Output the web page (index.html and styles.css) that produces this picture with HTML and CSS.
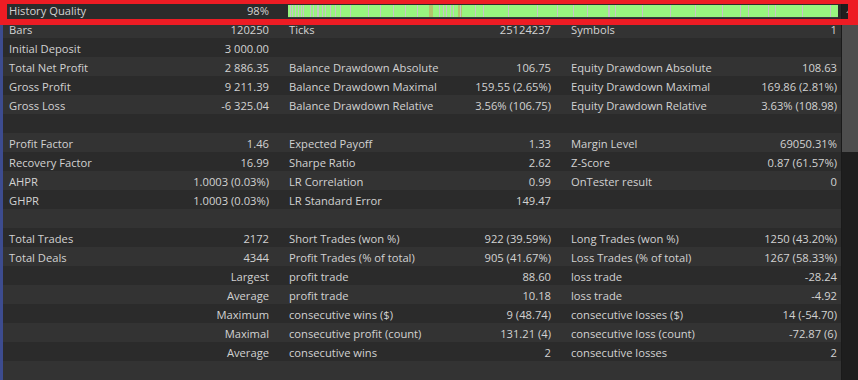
FILE: index.html
```html
<!DOCTYPE html>
<html>
<head>
<meta charset="utf-8">
<link rel="stylesheet" href="styles.css">
</head>
<body>
<div class="window">
  <div class="strip"></div>
  <div class="table">
    <div class="row">
      <span class="ca">History Quality</span><span class="cb">98%</span>
      <div class="barcell">
        <div class="bar">
          <i style="left:2px"></i><i style="left:4px"></i><i style="left:7px"></i><i style="left:10px"></i><i style="left:13px"></i><i style="left:15px"></i><i style="left:22px"></i><i style="left:25px"></i><i class="w" style="left:29px"></i><i style="left:34px"></i><i style="left:37px"></i><i style="left:42px"></i><i style="left:47px"></i><i style="left:52px"></i><i style="left:62px"></i><i style="left:80px"></i><i style="left:92px"></i><i style="left:105px"></i><i style="left:117px"></i><i style="left:129px"></i><i class="o" style="left:141px"></i><i style="left:151px"></i><i style="left:155px"></i><i style="left:158px"></i><i style="left:162px"></i><i style="left:165px"></i><i class="o" style="left:170px"></i><i style="left:172px"></i><i style="left:187px"></i><i style="left:195px"></i><i style="left:220px"></i><i style="left:249px"></i><i style="left:269px"></i><i style="left:285px"></i><i style="left:299px"></i><i class="w" style="left:320px"></i><i style="left:327px"></i><i style="left:354px"></i><i style="left:382px"></i><i style="left:407px"></i><i style="left:434px"></i><i style="left:452px"></i><i style="left:460px"></i><i style="left:480px"></i><i style="left:487px"></i><i style="left:514px"></i><i style="left:542px"></i>
        </div>
      </div>
    </div>
    <div class="row"><span class="ca">Bars</span><span class="cb">120250</span><span class="cc">Ticks</span><span class="cd">25124237</span><span class="ce">Symbols</span><span class="cf">1</span></div>
    <div class="row"><span class="ca">Initial Deposit</span><span class="cb">3 000.00</span><span class="cc"></span><span class="cd"></span><span class="ce"></span><span class="cf"></span></div>
    <div class="row"><span class="ca">Total Net Profit</span><span class="cb">2 886.35</span><span class="cc">Balance Drawdown Absolute</span><span class="cd">106.75</span><span class="ce">Equity Drawdown Absolute</span><span class="cf">108.63</span></div>
    <div class="row"><span class="ca">Gross Profit</span><span class="cb">9 211.39</span><span class="cc">Balance Drawdown Maximal</span><span class="cd">159.55 (2.65%)</span><span class="ce">Equity Drawdown Maximal</span><span class="cf">169.86 (2.81%)</span></div>
    <div class="row"><span class="ca">Gross Loss</span><span class="cb">-6 325.04</span><span class="cc">Balance Drawdown Relative</span><span class="cd">3.56% (106.75)</span><span class="ce">Equity Drawdown Relative</span><span class="cf">3.63% (108.98)</span></div>
    <div class="row"></div>
    <div class="row"><span class="ca">Profit Factor</span><span class="cb">1.46</span><span class="cc">Expected Payoff</span><span class="cd">1.33</span><span class="ce">Margin Level</span><span class="cf">69050.31%</span></div>
    <div class="row"><span class="ca">Recovery Factor</span><span class="cb">16.99</span><span class="cc">Sharpe Ratio</span><span class="cd">2.62</span><span class="ce">Z-Score</span><span class="cf">0.87 (61.57%)</span></div>
    <div class="row"><span class="ca">AHPR</span><span class="cb">1.0003 (0.03%)</span><span class="cc">LR Correlation</span><span class="cd">0.99</span><span class="ce">OnTester result</span><span class="cf">0</span></div>
    <div class="row"><span class="ca">GHPR</span><span class="cb">1.0003 (0.03%)</span><span class="cc">LR Standard Error</span><span class="cd">149.47</span><span class="ce"></span><span class="cf"></span></div>
    <div class="row"></div>
    <div class="row"><span class="ca">Total Trades</span><span class="cb">2172</span><span class="cc">Short Trades (won %)</span><span class="cd">922 (39.59%)</span><span class="ce">Long Trades (won %)</span><span class="cf">1250 (43.20%)</span></div>
    <div class="row"><span class="ca">Total Deals</span><span class="cb">4344</span><span class="cc">Profit Trades (% of total)</span><span class="cd">905 (41.67%)</span><span class="ce">Loss Trades (% of total)</span><span class="cf">1267 (58.33%)</span></div>
    <div class="row"><span class="ca"></span><span class="cb">Largest</span><span class="cc">profit trade</span><span class="cd">88.60</span><span class="ce">loss trade</span><span class="cf">-28.24</span></div>
    <div class="row"><span class="ca"></span><span class="cb">Average</span><span class="cc">profit trade</span><span class="cd">10.18</span><span class="ce">loss trade</span><span class="cf">-4.92</span></div>
    <div class="row"><span class="ca"></span><span class="cb">Maximum</span><span class="cc">consecutive wins ($)</span><span class="cd">9 (48.74)</span><span class="ce">consecutive losses ($)</span><span class="cf">14 (-54.70)</span></div>
    <div class="row"><span class="ca"></span><span class="cb">Maximal</span><span class="cc">consecutive profit (count)</span><span class="cd">131.21 (4)</span><span class="ce">consecutive loss (count)</span><span class="cf">-72.87 (6)</span></div>
    <div class="row"><span class="ca"></span><span class="cb">Average</span><span class="cc">consecutive wins</span><span class="cd">2</span><span class="ce">consecutive losses</span><span class="cf">2</span></div>
    <div class="row"></div>
  </div>
  <div class="scrollbar">
    <div class="arrow"></div>
    <div class="thumb"></div>
    <div class="track"></div>
  </div>
  <div class="highlight"></div>
</div>
</body>
</html>
```

FILE: styles.css
```css
html, body {
  margin: 0;
  padding: 0;
  background: #2b2b2b;
}

.window {
  position: relative;
  display: flex;
  width: 858px;
  height: 380px;
  overflow: hidden;
  background: #1e1e1e;
  font-family: "Open Sans", "Noto Sans", sans-serif;
  font-size: 11.2px;
  color: #d2d2d2;
}

.strip {
  flex: none;
  width: 3px;
  background: #3d4c8f;
}

.table {
  flex: none;
  width: 838px;
}

.row {
  display: grid;
  grid-template-columns: 147px 129px 171px 111px 159px 121px;
  height: 19px;
  background: #333333;
}

.row:nth-child(odd) {
  background: #2b2b2b;
}

.row > span {
  padding-top: 2px;
  line-height: 17px;
  white-space: nowrap;
}

.ca { padding-left: 6px; }
.cb { padding-right: 10px; text-align: right; }
.cc { padding-left: 10px; }
.cd { padding-right: 10px; text-align: right; }
.ce { padding-left: 10px; }
.cf { padding-right: 4px; text-align: right; }

.barcell {
  grid-column: 3 / 7;
  padding: 5px 3px 0 9px;
}

.bar {
  position: relative;
  height: 12px;
  background: #98f57f;
  border-bottom: 1px solid #3a3a3a;
}

.bar i {
  position: absolute;
  top: 0;
  bottom: 0;
  width: 1px;
  background: #c6c6c6;
}

.bar i.w {
  width: 2px;
}

.bar i.o {
  width: 4px;
  background: #b4c46c;
}

.scrollbar {
  flex: none;
  display: flex;
  flex-direction: column;
  width: 16px;
  border-left: 1px solid #1a1a1a;
  background: #1e1e1e;
}

.arrow {
  position: relative;
  height: 19px;
}

.arrow::before {
  content: "";
  position: absolute;
  left: 4px;
  top: 8px;
  border-left: 4px solid transparent;
  border-right: 4px solid transparent;
  border-bottom: 5px solid #8a8a8a;
}

.thumb {
  height: 133px;
  background: #4d4d4d;
}

.track {
  flex: 1;
}

.highlight {
  position: absolute;
  left: 0;
  top: 0;
  width: 858px;
  height: 25px;
  box-sizing: border-box;
  border-style: solid;
  border-color: #ed1c24;
  border-width: 4px 10px 6px 7px;
}
```
